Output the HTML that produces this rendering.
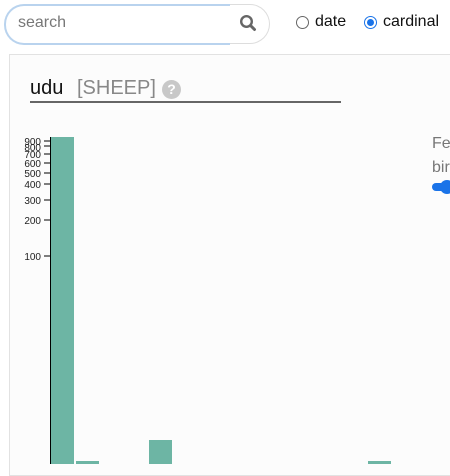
<!DOCTYPE html>
<html><head><style>
body{margin:0;width:450px;height:464px;overflow:hidden;background:#fff;font-family:"Liberation Sans",Arial,sans-serif;position:relative}
.a{position:absolute}
</style></head><body>
<div class="a" style="left:9px;top:54px;width:450px;height:420px;border:1px solid #e2e2e2;background:#fcfcfc"></div>
<div class="a" style="left:4px;top:4px;width:224px;height:37px;border:2px solid #b9d3ee;border-right:none;border-radius:20px 0 0 20px;background:#fff"></div>
<div class="a" style="left:18px;top:14px;font-size:16px;color:#777">search</div>
<div class="a" style="left:230px;top:4px;width:39px;height:38px;border:1px solid #ddd;border-left:none;border-radius:0 20px 20px 0;background:#fff"></div>
<svg class="a" style="left:239px;top:14px" width="20" height="20" viewBox="0 0 20 20"><circle cx="7.5" cy="7.5" r="5.3" fill="none" stroke="#666" stroke-width="2.4"/><line x1="11.5" y1="11.5" x2="15.5" y2="15.5" stroke="#666" stroke-width="3" stroke-linecap="round"/></svg>
<div class="a" style="left:296px;top:16px;width:13px;height:13px;border:1px solid #666;border-radius:50%;box-sizing:border-box"></div>
<div class="a" style="left:315px;top:13px;font-size:16px;color:#111">date</div>
<div class="a" style="left:364px;top:16px;width:13px;height:13px;border:1px solid #1a73e8;border-radius:50%;box-sizing:border-box;background:#fff"><div style="margin:2px;width:7px;height:7px;border-radius:50%;background:#1a73e8"></div></div>
<div class="a" style="left:383px;top:13px;font-size:16px;color:#111">cardinal</div>
<div class="a" style="left:30px;top:77px;font-size:20px;color:#111">udu</div>
<div class="a" style="left:77px;top:77px;font-size:20px;color:#888">[SHEEP]</div>
<div class="a" style="left:162px;top:80px;width:19px;height:19px;border-radius:50%;background:#c8c8c8;color:#fff;font-size:14px;font-weight:bold;text-align:center;line-height:19px">?</div>
<div class="a" style="left:30px;top:101px;width:311px;height:2px;background:#666"></div>
<svg class="a" style="left:0;top:0" width="450" height="464">
<g font-size="10" fill="#222" text-anchor="end" font-family="Liberation Sans">
<text x="41" y="145">900</text><text x="41" y="151">800</text><text x="41" y="158">700</text><text x="41" y="167">600</text><text x="41" y="177">500</text><text x="41" y="188">400</text><text x="41" y="204">300</text><text x="41" y="224">200</text><text x="41" y="260">100</text>
</g>
<g stroke="#000" stroke-width="1">
<line x1="50.5" y1="137" x2="50.5" y2="464"/>
<line x1="44" y1="141" x2="50" y2="141"/><line x1="44" y1="146" x2="50" y2="146"/><line x1="44" y1="154" x2="50" y2="154"/><line x1="44" y1="163" x2="50" y2="163"/><line x1="44" y1="173" x2="50" y2="173"/><line x1="44" y1="184" x2="50" y2="184"/><line x1="44" y1="200" x2="50" y2="200"/><line x1="44" y1="220" x2="50" y2="220"/><line x1="44" y1="256" x2="50" y2="256"/>
</g>
<g fill="#6db5a4">
<rect x="51" y="137" width="23" height="327"/><rect x="76" y="461" width="23" height="3"/><rect x="149" y="440" width="23" height="24"/><rect x="368" y="461" width="23" height="3"/>
</g>
</svg>
<div class="a" style="left:432px;top:132px;font-size:16px;color:#777;line-height:24px">Fe<br>bir</div>
<div class="a" style="left:432px;top:183px;width:30px;height:8px;border-radius:4px;background:#1a73e8"></div>
<div class="a" style="left:440px;top:180px;width:14px;height:14px;border-radius:50%;background:#1a73e8"></div>
</body></html>
